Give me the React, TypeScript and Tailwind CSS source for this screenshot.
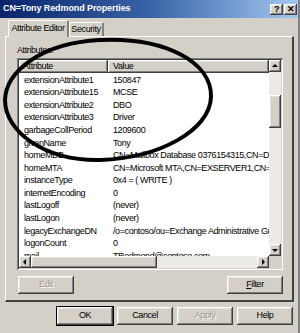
import React from "react";

const rows: [string, string][] = [
  ["extensionAttribute1", "150847"],
  ["extensionAttribute15", "MCSE"],
  ["extensionAttribute2", "DBO"],
  ["extensionAttribute3", "Driver"],
  ["garbageCollPeriod", "1209600"],
  ["givenName", "Tony"],
  ["homeMDB", "CN=Mailbox Database 0376154315,CN=Database,CN=Exchange"],
  ["homeMTA", "CN=Microsoft MTA,CN=EXSERVER1,CN=Servers,CN=Exchange"],
  ["instanceType", "0x4 = ( WRITE )"],
  ["internetEncoding", "0"],
  ["lastLogoff", "(never)"],
  ["lastLogon", "(never)"],
  ["legacyExchangeDN", "/o=contoso/ou=Exchange Administrative Group"],
  ["logonCount", "0"],
  ["mail", "TRedmond@contoso.com"],
];

const raised =
  "shadow-[inset_-1px_-1px_#404040,inset_1px_1px_#ffffff,inset_-2px_-2px_#808080,inset_2px_2px_#e4e2dc]";

function Btn({
  label,
  disabled,
  def,
  ul,
}: {
  label: string;
  disabled?: boolean;
  def?: boolean;
  ul?: boolean;
}) {
  return (
    <div
      className={`w-[56px] h-[18px] bg-[#d4d0c8] flex items-center justify-center ${raised} ${
        def ? "outline outline-1 outline-black" : ""
      }`}
    >
      <span
        className={
          disabled
            ? "text-[#9a978f] [text-shadow:1px_1px_0_#ffffff]"
            : "text-black"
        }
      >
        {ul ? (
          <>
            <span className="underline">{label[0]}</span>
            {label.slice(1)}
          </>
        ) : (
          label
        )}
      </span>
    </div>
  );
}

function Arrow({ dir }: { dir: "up" | "down" | "left" | "right" }) {
  const pts =
    dir === "up"
      ? "1,5 7,5 4,2"
      : dir === "down"
      ? "1,3 7,3 4,6"
      : dir === "left"
      ? "5,1 5,7 2,4"
      : "3,1 3,7 6,4";
  return (
    <div className={`w-[12px] h-[12px] bg-[#d4d0c8] flex items-center justify-center ${raised}`}>
      <svg width="8" height="8" viewBox="0 0 8 8">
        <polygon points={pts} fill="#000" />
      </svg>
    </div>
  );
}

export default function App() {
  return (
    <div
      className="relative w-[300px] h-[333px] bg-[#d4d0c8] overflow-hidden text-[9px] tracking-[-0.4px] text-black"
      style={{ fontFamily: '"Liberation Sans", Arial, sans-serif' }}
    >
      {/* Title bar */}
      <div className="h-[18px] flex items-center justify-between pl-[3px] pr-[3px] bg-gradient-to-r from-[#0a246a] via-[#3a64a8] to-[#a6caf0]">
        <span className="text-white font-bold text-[9px] tracking-[-0.1px]">
          CN=Tony Redmond Properties
        </span>
        <div className="flex gap-[1px]">
          <div className={`w-[13px] h-[11px] bg-[#d4d0c8] flex items-center justify-center text-[9px] font-bold leading-none ${raised}`}>
            ?
          </div>
          <div className={`w-[13px] h-[11px] bg-[#d4d0c8] flex items-center justify-center text-[9px] font-bold leading-none ${raised}`}>
            ✕
          </div>
        </div>
      </div>

      {/* Tabs */}
      <div className="h-[18px] pl-[8px] flex items-end relative z-10">
        <div className="h-[17px] w-[61px] bg-[#d4d0c8] border-t border-l border-white border-r-2 border-r-[#808080] rounded-t-[2px] flex items-center justify-center pb-[1px] -mb-[1px]">
          Attribute Editor
        </div>
        <div className="h-[14px] w-[35px] bg-[#d4d0c8] border-t border-l border-white border-r-2 border-r-[#808080] rounded-t-[2px] flex items-center justify-center">
          Security
        </div>
      </div>

      {/* Panel */}
      <div className="ml-[5px] w-[289px] h-[266px] border-t border-l border-white border-r-2 border-b-2 border-r-[#404040] border-b-[#404040] flex flex-col pl-[11px]">
        <div className="h-[21px] flex items-end pb-[1px]">Attributes:</div>
        {/* List box */}
        <div className="w-[266px] h-[212px] bg-white p-[2px] shadow-[inset_1px_1px_#808080,inset_-1px_-1px_#ffffff,inset_2px_2px_#404040,inset_-2px_-2px_#d4d0c8] flex flex-col">
          <div className="flex h-[196px]">
            <div className="w-[250px] flex flex-col overflow-hidden">
              <div className="flex h-[13px] shrink-0">
                <div className={`w-[89px] bg-[#d4d0c8] pl-[4px] flex items-center ${raised}`}>Attribute</div>
                <div className={`flex-1 bg-[#d4d0c8] pl-[5px] flex items-center ${raised}`}>Value</div>
              </div>
              <div className="pt-[1px]">
                {rows.map(([a, v]) => (
                  <div key={a} className="flex h-[12.6px] items-center whitespace-nowrap">
                    <div className="w-[89px] pl-[5px] overflow-hidden">{a}</div>
                    <div className="flex-1 pl-[5px] overflow-hidden">{v}</div>
                  </div>
                ))}
              </div>
            </div>
            {/* vertical scrollbar */}
            <div className="w-[12px] flex flex-col bg-[#eceae6]">
              <Arrow dir="up" />
              <div className="h-[23px]" />
              <div className={`h-[33px] bg-[#d4d0c8] ${raised}`} />
              <div className="flex-1" />
              <Arrow dir="down" />
            </div>
          </div>
          <div className="flex h-[12px]">
            <div className="w-[250px] flex bg-[#eceae6]">
              <Arrow dir="left" />
              <div className={`w-[126px] bg-[#d4d0c8] ${raised}`} />
              <div className="flex-1" />
              <Arrow dir="right" />
            </div>
            <div className="w-[12px] bg-[#d4d0c8]" />
          </div>
        </div>
        {/* Edit / Filter */}
        <div className="w-[266px] flex justify-between pt-[6px] pl-[1px]">
          <Btn label="Edit" disabled />
          <Btn label="Filter" ul />
        </div>
      </div>

      {/* Bottom buttons */}
      <div className="flex gap-[4px] pl-[57px] pt-[5px]">
        <Btn label="OK" def />
        <Btn label="Cancel" />
        <Btn label="Apply" disabled />
        <Btn label="Help" />
      </div>

      {/* Right window edge */}
      <div className="absolute top-0 right-0 w-[2px] h-full bg-[#808080]" />

      {/* Hand-drawn ellipse */}
      <svg className="absolute inset-0 pointer-events-none" width="300" height="333" viewBox="0 0 300 333">
        <path
          d="M 100 40 C 165 37, 212 62, 211 97 C 210 130, 160 158, 100 160 C 45 161, 5 132, 5 100 C 6 72, 40 43, 100 40 Z"
          fill="none"
          stroke="#000"
          strokeWidth="4"
        />
      </svg>
    </div>
  );
}
